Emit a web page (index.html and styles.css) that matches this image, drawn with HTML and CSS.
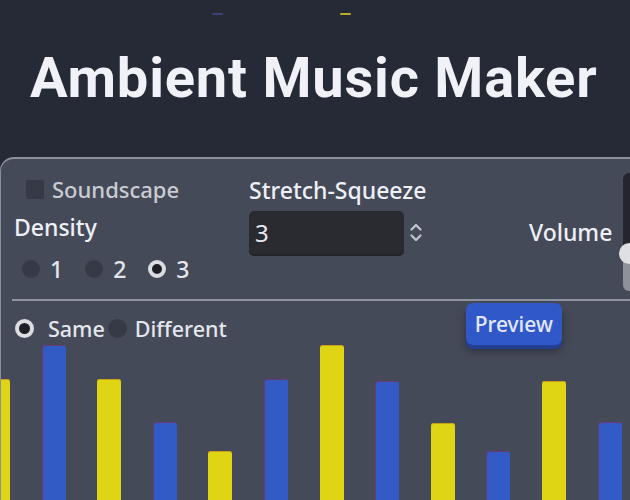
FILE: index.html
```html
<!DOCTYPE html>
<html lang="en">
<head>
    <meta charset="UTF-8">
    <meta name="viewport" content="width=device-width, initial-scale=1.0">
    <title>Ambient Music Maker</title>
    <link rel="stylesheet" href="styles.css">
</head>
<body>
    <div class="marks">
        <span class="mark mark-blue"></span>
        <span class="mark mark-yellow"></span>
    </div>

    <h1 class="title">Ambient Music Maker</h1>

    <div class="panel">
        <div class="controls">
            <div class="col-density">
                <div class="check">
                    <span class="check-box"></span>
                    <span class="check-label">Soundscape</span>
                </div>
                <div class="label density-label">Density</div>
                <div class="radio-group">
                    <div class="radio"><span class="radio-dot"></span>1</div>
                    <div class="radio"><span class="radio-dot"></span>2</div>
                    <div class="radio"><span class="radio-dot checked"></span>3</div>
                </div>
            </div>

            <div class="col-stretch">
                <div class="label stretch-label">Stretch-Squeeze</div>
                <div class="spin">
                    <div class="spin-input">3</div>
                    <svg class="spin-arrows" width="14" height="21" viewBox="0 0 14 21">
                        <path d="M2.5 7.5 L7 3 L11.5 7.5" fill="none" stroke="#c3c6cd" stroke-width="2.2" stroke-linecap="round" stroke-linejoin="round"/>
                        <path d="M2.5 13.5 L7 18 L11.5 13.5" fill="none" stroke="#c3c6cd" stroke-width="2.2" stroke-linecap="round" stroke-linejoin="round"/>
                    </svg>
                </div>
            </div>

            <div class="col-volume">
                <div class="label volume-label">Volume</div>
                <div class="vslider">
                    <div class="vslider-empty"></div>
                    <div class="vslider-fill"></div>
                    <span class="vslider-thumb"></span>
                </div>
            </div>
        </div>

        <div class="divider"></div>

        <div class="mode-row">
            <div class="mode-group">
                <div class="radio mode-radio"><span class="radio-dot checked"></span>Same</div>
                <div class="radio mode-radio"><span class="radio-dot"></span>Different</div>
            </div>
            <button class="preview-button">Preview</button>
        </div>

        <div class="bars">
            <div class="bar yellow" style="height: 131px"></div>
            <div class="bar blue" style="height: 165px"></div>
            <div class="bar yellow" style="height: 131px"></div>
            <div class="bar blue" style="height: 88px"></div>
            <div class="bar yellow" style="height: 59px"></div>
            <div class="bar blue" style="height: 131px"></div>
            <div class="bar yellow" style="height: 165px"></div>
            <div class="bar blue" style="height: 129px"></div>
            <div class="bar yellow" style="height: 87px"></div>
            <div class="bar blue" style="height: 59px"></div>
            <div class="bar yellow" style="height: 129px"></div>
            <div class="bar blue" style="height: 88px"></div>
        </div>
    </div>
</body>
</html>
```

FILE: styles.css
```css
* {
    margin: 0;
    padding: 0;
    box-sizing: border-box;
}

body {
    font-family: 'Noto Sans', 'Open Sans', sans-serif;
    background: #262a36;
    color: #eef0f5;
    height: 500px;
    overflow: hidden;
}

/* tiny preview marks at the very top */
.marks {
    display: flex;
    align-items: flex-start;
    height: 15px;
    padding-top: 13px;
}

.mark {
    display: block;
    width: 11px;
    height: 2px;
    border-radius: 1px;
}

.mark-blue {
    margin-left: 212px;
    background: #3b4274;
}

.mark-yellow {
    margin-left: 117px;
    background: #b5ad25;
}

.title {
    font-family: Roboto, 'Noto Sans', sans-serif;
    font-size: 56px;
    font-weight: 700;
    line-height: 56px;
    color: #f1f2f7;
    margin-top: 35px;
    padding-left: 30px;
    letter-spacing: 0.8px;
    white-space: nowrap;
}

.panel {
    margin-top: 51px;
    width: 680px;
    height: 380px;
    background: #454a59;
    border: 1px solid #8c909b;
    border-top: 2px solid #8c909b;
    border-radius: 14px 14px 0 0;
    overflow: hidden;
}

.controls {
    display: flex;
    height: 140px;
}

.label {
    font-size: 23px;
    font-weight: 500;
    line-height: 28px;
    color: #eef0f5;
}

/* density column */
.col-density {
    width: 248px;
    padding-left: 13px;
}

.check {
    display: flex;
    align-items: center;
    gap: 8px;
    height: 20px;
    margin-top: 20px;
    margin-left: 12px;
}

.check-box {
    width: 18px;
    height: 19px;
    border-radius: 2px;
    background: #363a46;
}

.check-label {
    font-size: 22px;
    font-weight: 500;
    line-height: 20px;
    color: #c9ccd3;
}

.density-label {
    margin-top: 14px;
}

.radio-group {
    display: flex;
    gap: 22px;
    margin-top: 19px;
    margin-left: 8px;
}

.radio {
    display: flex;
    align-items: center;
    gap: 10px;
    height: 18px;
    font-size: 23px;
    font-weight: 500;
    line-height: 18px;
    color: #e4e6ec;
}

.radio-dot {
    display: block;
    width: 18px;
    height: 18px;
    border-radius: 50%;
    background: #363a46;
}

.radio-dot.checked {
    background: #1f2027;
    border: 4px solid #dcdde0;
}

/* stretch column */
.col-stretch {
    width: 280px;
}

.stretch-label {
    margin-top: 17px;
}

.spin {
    display: flex;
    align-items: center;
    gap: 5px;
    margin-top: 7px;
}

.spin-input {
    width: 155px;
    height: 43px;
    padding-left: 6px;
    background: #2a2b31;
    border-radius: 5px;
    box-shadow: 0 2px 0 #22232a;
    font-size: 24px;
    line-height: 43px;
    color: #e6e8ee;
}

/* volume column */
.col-volume {
    display: flex;
    align-items: flex-start;
    gap: 11px;
}

.volume-label {
    margin-top: 59px;
}

.vslider {
    position: relative;
    display: flex;
    flex-direction: column;
    width: 13px;
    height: 118px;
    margin-top: 14px;
    border-radius: 6px;
}

.vslider-empty {
    height: 80px;
    background: #25262d;
    border-radius: 6px 6px 0 0;
}

.vslider-fill {
    flex: 1;
    background: #8e919a;
    border-radius: 0 0 6px 6px;
}

.vslider-thumb {
    position: absolute;
    left: -4px;
    top: 70px;
    width: 21px;
    height: 21px;
    border-radius: 50%;
    background: #dfe0e3;
}

.divider {
    height: 2px;
    margin-left: 11px;
    background: #8f939d;
}

/* same / different + preview */
.mode-row {
    display: flex;
    align-items: flex-start;
    height: 49px;
    padding-left: 14px;
}

.mode-group {
    display: flex;
    margin-top: 18px;
}

.mode-radio {
    height: 19px;
    line-height: 19px;
    font-size: 21.5px;
    gap: 14px;
}

.mode-radio .radio-dot {
    width: 19px;
    height: 19px;
}

.mode-radio + .mode-radio {
    margin-left: 3px;
    gap: 8px;
}

.preview-button {
    margin-top: 2px;
    margin-left: 239px;
    width: 96px;
    height: 42px;
    border: none;
    border-radius: 7px;
    background: #3158c8;
    color: #e3e8f7;
    font-family: 'Noto Sans', sans-serif;
    font-size: 21px;
    font-weight: 500;
    box-shadow: 0 4px 0 #223f92, 0 6px 8px rgba(0, 0, 0, 0.35);
    cursor: pointer;
}

/* note bars */
.bars {
    display: flex;
    align-items: flex-end;
    gap: 31.6px;
    height: 160px;
    margin-left: -15px;
}

.bar {
    flex: none;
    width: 24px;
    border-radius: 3px 3px 0 0;
}

.bar.yellow {
    background: #e0d515;
    box-shadow: inset 0 1px 0 #c9a019;
}

.bar.blue {
    background: #335bc5;
    box-shadow: inset 1px 1px 0 #6a3a78;
}
```
